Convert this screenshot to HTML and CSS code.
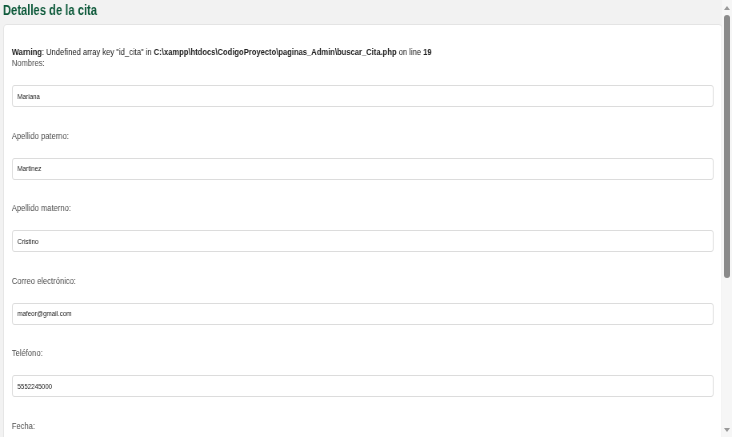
FILE: index.html
```html
<!DOCTYPE html>
<html lang="es">
<head>
<meta charset="utf-8">
<title>Detalles de la cita</title>
<link rel="stylesheet" href="styles.css">
</head>
<body>
<div class="page">
  <h1 class="title">Detalles de la cita</h1>
  <div class="card">
    <p class="warning"><br><b>Warning</b>: Undefined array key "id_cita" in <b>C:\xampp\htdocs\CodigoProyecto\paginas_Admin\buscar_Cita.php</b> on line <b>19</b></p>
    <form class="form">
      <div class="field">
        <label class="label">Nombres:</label>
        <input class="input" type="text" value="Mariana">
      </div>
      <div class="field">
        <label class="label">Apellido paterno:</label>
        <input class="input" type="text" value="Martinez">
      </div>
      <div class="field">
        <label class="label">Apellido materno:</label>
        <input class="input" type="text" value="Cristino">
      </div>
      <div class="field">
        <label class="label">Correo electrónico:</label>
        <input class="input" type="text" value="mafeor@gmail.com">
      </div>
      <div class="field">
        <label class="label">Teléfono:</label>
        <input class="input" type="text" value="5552245000">
      </div>
      <div class="field">
        <label class="label">Fecha:</label>
        <input class="input" type="text" value="2024-05-20">
      </div>
      <div class="field">
        <label class="label">Hora:</label>
        <input class="input" type="text" value="10:00">
      </div>
    </form>
  </div>
</div>
<div class="scrollbar">
  <div class="arrow arrow-up"></div>
  <div class="thumb"></div>
  <div class="track-rest"></div>
  <div class="arrow arrow-down"></div>
</div>
</body>
</html>
```
FILE: styles.css
```css
html, body {
  margin: 0;
  padding: 0;
}
body {
  display: flex;
  height: 437px;
  overflow: hidden;
  background: #f2f2f2;
  font-family: "Liberation Sans", Arial, sans-serif;
  color: #222;
}
/* the reference is a horizontally squeezed capture: lay out wider, then squeeze 0.8 */
.page {
  flex: none;
  box-sizing: border-box;
  width: 902.5px;
  margin-right: -180.5px;
  padding: 2px 0 0 3.75px;
  transform: scaleX(0.8);
  transform-origin: 0 0;
  will-change: transform;
}
.title {
  margin: 0 0 6px 0;
  font-size: 14px;
  line-height: 16px;
  font-weight: bold;
  color: #0e5a3b;
}
.card {
  background: #fff;
  border: 1px solid #e4e4e4;
  border-radius: 4px;
  padding: 10px 10px 20px 10px;
}
.warning {
  margin: 0;
  font-size: 9.5px;
  line-height: 11px;
  color: #222;
}
.form {
  margin: 0;
}
.field {
  display: flex;
  flex-direction: column;
}
.label {
  font-size: 9.5px;
  line-height: 11px;
  color: #505050;
}
.input {
  box-sizing: border-box;
  height: 22px;
  margin: 17px 0 22.5px 0;
  padding: 0 6px;
  border: 1px solid #dcdcdc;
  border-radius: 3px;
  background: #fff;
  font-family: inherit;
  font-size: 7.8px;
  color: #222;
  outline: none;
}
.scrollbar {
  width: 10px;
  flex: none;
  display: flex;
  flex-direction: column;
  align-items: center;
  background: #f6f6f6;
}
.arrow {
  width: 0;
  height: 0;
  border-left: 3px solid transparent;
  border-right: 3px solid transparent;
}
.arrow-up {
  margin-top: 6px;
  border-bottom: 4px solid #9a9a9a;
}
.arrow-down {
  margin-bottom: 5px;
  border-top: 4px solid #9a9a9a;
}
.thumb {
  margin-top: 5px;
  width: 6px;
  height: 263px;
  border-radius: 3px;
  background: #8a8a8a;
}
.track-rest {
  flex: 1;
}
```
